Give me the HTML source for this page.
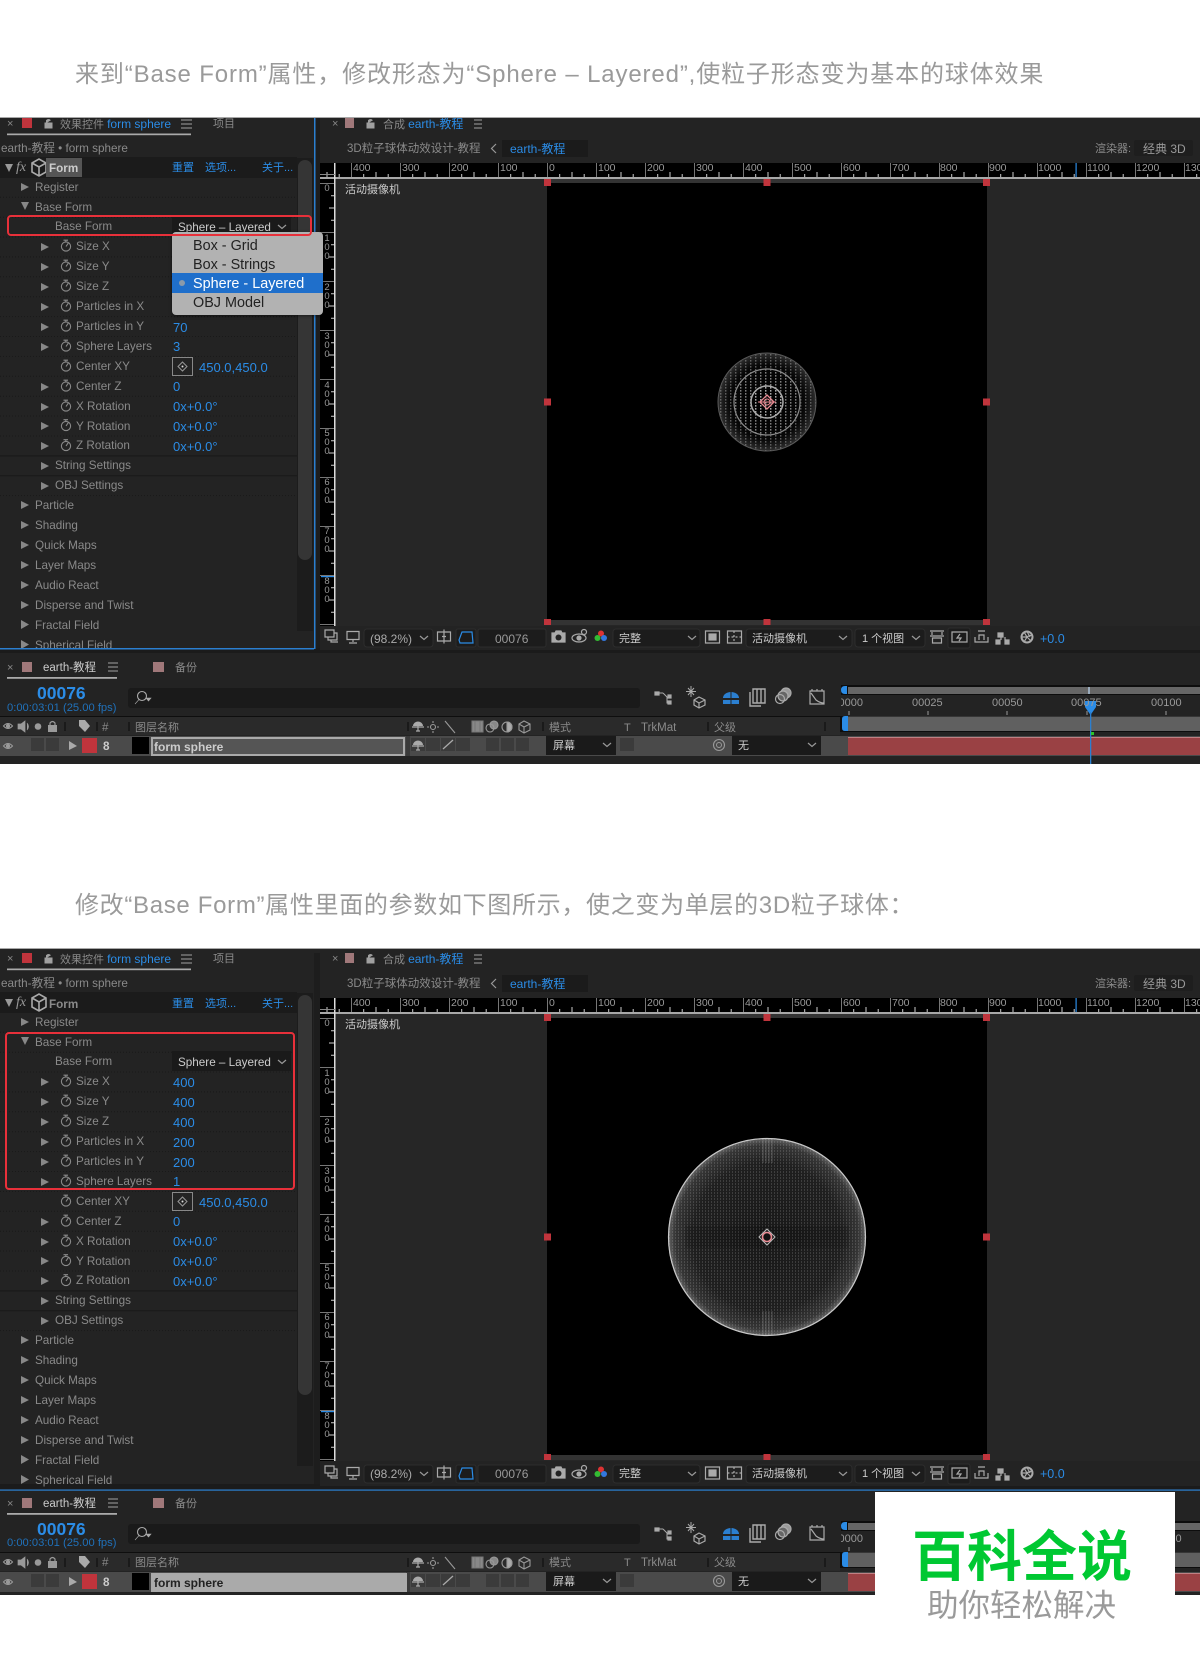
<!DOCTYPE html>
<html lang="zh"><head><meta charset="utf-8"><title>Form</title>
<style>
html,body{margin:0;padding:0;background:#fff}
body{width:1200px;height:1662px;position:relative;overflow:hidden;font-family:"Liberation Sans","Noto Sans CJK SC",sans-serif}
.h{position:absolute;left:75px;white-space:nowrap;color:#9a9a9a;font-size:24px;line-height:0;letter-spacing:.86px}
.p{position:absolute;left:0;width:1200px;height:764px}
.p svg.g{position:absolute;left:0;top:0}
.t,.b,.v,.r,.d,.c{position:absolute;white-space:nowrap;line-height:0;font-size:11.7px;color:#8a8a8a}
.t{margin-top:1px}
.n{margin-top:0}
.b{color:#2b8ce6}
.v{color:#2b8ce6;font-size:13px}
.r{font-size:10.5px;color:#999}
.d{font-size:9.5px;line-height:9px;color:#999;width:10px;text-align:center;left:322px}
.c{font-size:11px}
.w{color:#ccc}
.m{position:absolute;left:193px;font-size:14.4px;line-height:0;color:#222;white-space:nowrap;margin-top:1px}
.z{position:absolute;left:841px;width:22px;height:12px;overflow:hidden;line-height:12px;font-size:11px;color:#999;text-align:right;direction:rtl}
</style></head><body>
<svg width="0" height="0" style="position:absolute"><defs>
<pattern id="rh" x="547" y="163" width="49" height="14" patternUnits="userSpaceOnUse"><path d="M.5 0V14" stroke="#777"/><path d="M12.7 11V14M37.2 11V14M25 9V14" stroke="#ccc"/></pattern>
<pattern id="rv" x="320" y="183" width="14" height="49" patternUnits="userSpaceOnUse"><path d="M0 .5H14" stroke="#777"/><path d="M11 12.7H14M11 37.2H14M9 25H14" stroke="#ccc"/></pattern>
<pattern id="ga" width="5" height="3" patternUnits="userSpaceOnUse"><rect width="1.4" height="1.6" fill="#d8d8d8"/></pattern>
<pattern id="gb" width="3" height="3" patternUnits="userSpaceOnUse"><rect width="1" height="2" fill="#bdbdbd"/></pattern>
<radialGradient id="ra"><stop offset="0" stop-color="#0a0a0a" stop-opacity=".1"/><stop offset=".75" stop-color="#555" stop-opacity=".08"/><stop offset="1" stop-color="#888" stop-opacity=".35"/></radialGradient>
<radialGradient id="rb"><stop offset="0" stop-color="#181818"/><stop offset=".75" stop-color="#1f1f1f"/><stop offset=".93" stop-color="#363636"/><stop offset="1" stop-color="#666"/></radialGradient>
<g id="sw" fill="none" stroke="#8a8a8a" stroke-width="1.1"><circle cx="6" cy="7.5" r="4.6"/><path d="M3.5 1.2H8M5.8 1.2V3M6 7.5L8.5 3.8"/></g>
<g id="eye" fill="none" stroke="#9a9a9a" stroke-width="1.1"><path d="M0 4Q4.5-1 9 4Q4.5 9 0 4Z"/><circle cx="4.5" cy="4" r="1.6" fill="#9a9a9a"/></g>
<g id="sh"><path d="M1 6A5 4.5 0 0 1 11 6Z" fill="#aaa"/><path d="M0 7H12M6 6V11M4 11H8" stroke="#aaa" stroke-width="1.2" fill="none"/></g>
<g id="ck"><path d="M0 0L4 3.5L8 0" fill="none" stroke="#999" stroke-width="1.2"/></g>
<g id="panel">
<rect x="0" y="117" width="1200" height="647" fill="#232323"/>
<rect x="0" y="117" width="1200" height="1" fill="#a8a8a8"/>
<rect x="314" y="118" width="6" height="532" fill="#1d1d1d"/>
<rect x="0" y="157" width="297" height="21" fill="#1b1b1b"/>
<path d="M0 197.3H297M0 217.2H297M0 237H297M0 256.9H297M0 276.8H297M0 296.7H297M0 316.6H297M0 336.5H297M0 356.4H297M0 376.3H297M0 396.2H297M0 416H297M0 436H297M0 495.6H297" stroke="#191919" stroke-width="1" stroke-dasharray="1 2"/>
<path d="M0 455.9H297M0 475.7H297" stroke="#191919"/>
<rect x="297" y="158" width="16" height="473" fill="#1c1c1c"/>
<rect x="298" y="160" width="14" height="400" rx="7" fill="#353535"/>
<rect x="7" y="133.5" width="184" height="1.7" fill="#aaa"/>
<rect x="22" y="118" width="10" height="10" fill="#c0343c"/>
<path d="M45 123h7v5h-7zM46.5 123v-2.5q2-2 4 0" fill="#a0a0a0" stroke="#a0a0a0"/>
<path d="M181 120H192M181 124H192M181 128H192" stroke="#888" stroke-width="1.2"/>
<path d="M9 172L5 164H13Z" fill="#999"/>
<path d="M32 163L39 159L46 163V172L39 176L32 172ZM32 163L39 167L46 163M39 167V176" fill="none" stroke="#aaa" stroke-width="1.6"/>
<path d="M21 183L29 187L21 191Z" fill="#888"/>
<path d="M21 202H29L25 210Z" fill="#888"/>
<g fill="#888"><path d="M21 501L29 505L21 509ZM21 521L29 525L21 529ZM21 541L29 545L21 549ZM21 561L29 565L21 569ZM21 581L29 585L21 589ZM21 601L29 605L21 609ZM21 620L29 624.500L21 629ZM21 640L29 644.500L21 649Z"/>
<path d="M41 243L49 247L41 251ZM41 263L49 267L41 271ZM41 283L49 287L41 291ZM41 303L49 307L41 311ZM41 323L49 327L41 331ZM41 343L49 347L41 351ZM41 383L49 387L41 391ZM41 403L49 407L41 411ZM41 422L49 426L41 430ZM41 442L49 446L41 450ZM41 462L49 466L41 470ZM41 482L49 486L41 490Z"/></g>
<use href="#sw" x="60" y="239"/><use href="#sw" x="60" y="259"/><use href="#sw" x="60" y="279"/><use href="#sw" x="60" y="299"/><use href="#sw" x="60" y="319"/><use href="#sw" x="60" y="339"/><use href="#sw" x="60" y="359"/><use href="#sw" x="60" y="379"/><use href="#sw" x="60" y="399"/><use href="#sw" x="60" y="418.500"/><use href="#sw" x="60" y="438.500"/>
<rect x="172" y="216" width="119" height="20" fill="#1a1a1a"/>
<use href="#ck" x="278" y="225"/>
<rect x="172.500" y="357.500" width="20" height="18" fill="#232323" stroke="#888"/>
<path d="M182.500 362L187 366.500L182.500 371L178 366.500Z" fill="none" stroke="#999"/><circle cx="182.500" cy="366.500" r="1" fill="#ddd"/>
<path d="M345 118h9v10h-9z" fill="#a0787a"/>
<path d="M367 123h7v5h-7zM368.500 123v-2.500q2-2 4 0" fill="#a0a0a0" stroke="#a0a0a0"/>
<path d="M474 120H482M474 124H482M474 128H482" stroke="#888" stroke-width="1.200"/>
<path d="M496 144L491.500 148.500L496 153" fill="none" stroke="#999" stroke-width="1.200"/>
<rect x="502" y="140" width="86" height="17" fill="#1b1b1b"/>
<rect x="1134" y="140" width="59" height="16" rx="2" fill="#1e1e1e"/>
<rect x="320" y="163" width="880" height="14" fill="#000"/>
<rect x="320" y="163" width="880" height="14" fill="url(#rh)"/>
<rect x="320" y="177" width="880" height="2" fill="#a8a8a8"/>
<rect x="1075.500" y="163" width="1.200" height="14" fill="#2b8ce6"/>
<rect x="335" y="179" width="865" height="447" fill="#262626"/>
<rect x="547" y="179" width="440" height="5" fill="#333"/>
<rect x="547" y="619" width="440" height="6" fill="#333"/>
<rect x="547" y="183" width="440" height="437" fill="#000"/>
<rect x="320" y="179" width="14" height="447" fill="#000"/>
<rect x="320" y="179" width="14" height="447" fill="url(#rv)"/>
<rect x="334" y="163" width="1.500" height="463" fill="#ddd"/>
<rect x="320" y="174" width="15" height="1" fill="#888"/>
<rect x="321" y="576" width="13" height="1.200" fill="#2b8ce6"/>
<g fill="#c0343c"><rect x="544" y="179" width="7" height="7"/><rect x="763.500" y="179" width="7" height="7"/><rect x="983" y="179" width="7" height="7"/><rect x="544" y="398.500" width="7" height="7"/><rect x="983" y="398.500" width="7" height="7"/><rect x="544" y="619" width="7" height="6"/><rect x="763.500" y="619" width="7" height="6"/><rect x="983" y="619" width="7" height="6"/></g>
</g>
<g id="lower">
<rect x="320" y="626" width="880" height="24" fill="#232323"/>
<rect x="320" y="650" width="880" height="3" fill="#1b1b1b"/>
<rect x="0" y="648" width="320" height="5" fill="#1b1b1b"/>
<g fill="#1c1c1c" stroke="#2d2d2d"><rect x="364" y="629" width="69" height="18" rx="3"/><rect x="456" y="629" width="20" height="18" rx="2"/><rect x="478" y="629" width="68" height="18" rx="2"/><rect x="613" y="629" width="87" height="18" rx="3"/><rect x="746" y="629" width="106" height="18" rx="3"/><rect x="855" y="629" width="70" height="18" rx="3"/><rect x="948" y="628" width="22" height="20" rx="2"/></g>
<g fill="none" stroke="#aaa" stroke-width="1.200">
<path d="M325 630h9v7h-9zM328 637v3h9v-7h-3M331 640v2h7"/>
<path d="M347 631.500h12v8h-12zM353 640v2M349 643h8"/>
<path d="M437.500 632h13v9h-13zM444 629.500v14M442 636.500h4"/>
<path d="M459 640L462 632H472L473 643H460Z" stroke="#2b8ce6"/>
<path d="M552 633h3l1-2h5l1 2h3v9h-13z" fill="#aaa"/><circle cx="558.500" cy="637.500" r="3" fill="#232323" stroke="none"/>
<ellipse cx="579" cy="638" rx="7" ry="4"/><circle cx="579" cy="638" r="2" fill="#aaa"/><circle cx="584" cy="632" r="2.500"/>
<path d="M705.500 631h14v12h-14z"/><rect x="709" y="634" width="7" height="6" fill="#aaa"/>
<path d="M727.500 631h14v12h-14z"/><path d="M727.500 637h14M734 631v12" stroke-dasharray="2 2"/>
<path d="M930 631h14M930 636h14M932 632v3M942 632v3M932.500 638h9v5h-9z"/>
<path d="M952 632h15v10h-15zM960 634l-3 4h4l-2 3"/>
<path d="M975 637v5h13v-5M979 640v-5h5v5M978 631h7"/>
<path d="M998 633h5v4h-5zM996 640h4v4h-4zM1005 640h4v4h-4zM1001 637v3M1005 637v3" fill="#aaa"/>
<circle cx="1027" cy="637" r="5.500" stroke-width="2"/><path d="M1027 631.500L1030 637M1032 635L1026 637M1031 641L1027 637M1024 642L1027 637M1021.500 637L1027 637M1024 632L1027 637"/>
</g>
<circle cx="601" cy="633.500" r="3" fill="#d33"/><circle cx="597.500" cy="638" r="3" fill="#3b3"/><circle cx="604" cy="638" r="3" fill="#37d"/>
<use href="#ck" x="420" y="636"/><use href="#ck" x="688" y="636"/><use href="#ck" x="839" y="636"/><use href="#ck" x="912" y="636"/>
<rect x="7" y="677" width="110" height="1.800" fill="#aaa"/>
<rect x="22" y="662" width="10" height="10" fill="#a0787a"/>
<rect x="153" y="662" width="11" height="10" fill="#a0787a"/>
<path d="M108 663H118M108 667H118M108 671H118" stroke="#888" stroke-width="1.200"/>
<rect x="128" y="688" width="512" height="20" rx="3" fill="#1a1a1a"/>
<circle cx="142" cy="696" r="4.500" fill="none" stroke="#aaa" stroke-width="1.100"/><path d="M139 699.500L135 704M146 698H151L148.500 701Z" fill="#aaa" stroke="#aaa" stroke-width=".6"/>
<g fill="none" stroke="#aaa" stroke-width="1.200">
<path d="M656 693H663M663 693L667 697H671M667 697V703H671" stroke-width="1"/><rect x="655" y="692" width="4" height="3" fill="#aaa"/><rect x="668" y="695" width="3" height="3" fill="#aaa"/><rect x="668" y="701" width="3" height="3" fill="#aaa"/>
<path d="M688 688L694 695M694 688L688 695M691 686V697M686 691.500H696" stroke-width="1"/><path d="M699 697L705 700V705L699 708L694 705V700ZM694 700L699 703L705 700M699 703V708"/>
<path d="M753 689h12v14h-12zM757 689v14M761 689v14M750 692v14h11" stroke-width="1.400"/>
<circle cx="786" cy="693" r="5" fill="#999"/><circle cx="783" cy="696" r="5" fill="#666"/><circle cx="780" cy="699" r="4.500"/>
<path d="M810 691h14v13h-14zM811 693L816 700Q820 703 824 703M812 689v2M817 689v2M822 689v2"/>
</g>
<path d="M723 698A8 6 0 0 1 739 698ZM723 700h16v4h-16z" fill="#2b7fd0"/><path d="M731 692V705" stroke="#232323"/>
<rect x="0" y="716" width="840" height="1.500" fill="#0e0e0e"/>
<rect x="0" y="717" width="840" height="18" fill="#2a2a2a"/>
<use href="#eye" x="3.500" y="722"/>
<path d="M18 724h3l4-3v11l-4-3h-3zM27 723q3 3.500 0 7" fill="#9a9a9a" stroke="#9a9a9a" stroke-width=".7"/>
<circle cx="38" cy="726.500" r="3.300" fill="#9a9a9a"/>
<path d="M48 725h9v7h-9z" fill="#9a9a9a"/><path d="M50 725v-2q2.500-3 5 0v2" fill="none" stroke="#9a9a9a" stroke-width="1.200"/>
<path d="M79 720h6l5 6-5 6-6-6z" fill="#aaa"/>
<path d="M65 722v9M97 722v9M129 722v9M408 722v9M543 722v9M708 722v9M825 722v9" stroke="#111" stroke-width="1.200"/>
<use href="#sh" x="412" y="720"/>
<g fill="none" stroke="#999" stroke-width="1.100"><circle cx="433" cy="727" r="2.500"/><path d="M433 721v2M433 731v2M427 727h2M437 727h2M445 721L455 733"/>
<path d="M472 721h11v11h-11zM475 721v11M480 721v11" fill="#888" stroke="#777"/>
<circle cx="494" cy="725" r="4" fill="#888"/><circle cx="490" cy="728" r="4"/>
<circle cx="507" cy="727" r="5"/><path d="M507 722A5 5 0 0 1 507 732Z" fill="#aaa"/>
<path d="M519 724L524 721L530 724V730L524 733L519 730ZM519 724L524 727L530 724M524 727V733"/></g>
<rect x="0" y="736" width="840" height="20" fill="#4a4a4a"/>
<use href="#eye" x="3.500" y="742"/>
<rect x="31" y="738" width="13" height="13" fill="#3b3b3b"/><rect x="46" y="738" width="13" height="13" fill="#3b3b3b"/>
<path d="M69 741L77 746L69 750Z" fill="#aaa"/>
<rect x="82" y="738" width="15" height="15" fill="#c0343c"/>
<rect x="132" y="737" width="17" height="17" fill="#000"/>
<rect x="406" y="736" width="4" height="20" fill="#3a3a3a"/>
<rect x="411" y="738" width="14" height="13" fill="#3b3b3b"/><use href="#sh" x="412" y="739"/>
<rect x="426" y="738" width="14" height="13" fill="#3b3b3b"/><rect x="441" y="738" width="14" height="13" fill="#3b3b3b"/><rect x="456" y="738" width="14" height="13" fill="#3b3b3b"/>
<path d="M443 749L453 740" stroke="#aaa" stroke-width="1.300"/>
<rect x="486" y="738" width="13" height="13" fill="#3b3b3b"/><rect x="501" y="738" width="13" height="13" fill="#3b3b3b"/><rect x="516" y="738" width="13" height="13" fill="#3b3b3b"/>
<rect x="546" y="736" width="70" height="19" fill="#1a1a1a"/><use href="#ck" x="603" y="743"/>
<rect x="620" y="738" width="14" height="13" fill="#3b3b3b"/>
<circle cx="719" cy="745" r="5.500" fill="none" stroke="#999" stroke-width="1.100"/><circle cx="719" cy="745" r="2.500" fill="none" stroke="#999"/>
<rect x="732" y="736" width="89" height="19" fill="#1a1a1a"/><use href="#ck" x="808" y="743"/>
<rect x="821" y="736" width="19" height="20" fill="#4a4a4a"/>
<rect x="840" y="685" width="360" height="79" fill="#232323"/>
<rect x="841" y="685" width="359" height="10" fill="#0d0d0d"/><rect x="848" y="687" width="352" height="7" fill="#666"/>
<path d="M847 686H845Q841 686 841 690Q841 694 845 694H847Z" fill="#2b8ce6"/>
<rect x="1088" y="687" width="2" height="7" fill="#9ab"/>
<rect x="841" y="695" width="359" height="20" fill="#232323"/>
<path d="M849 711V715M928 711V715M1007 711V715M1087 711V715M1166 711V715" stroke="#999"/>
<rect x="840" y="716" width="360" height="16" fill="#0d0d0d"/><rect x="848" y="716.500" width="352" height="14.500" fill="#606060"/>
<path d="M848 716H845Q842 716 842 719V728Q842 731 845 731H848Z" fill="#2b8ce6"/>
<rect x="840" y="732" width="360" height="4" fill="#232323"/>
<rect x="840" y="736" width="360" height="20" fill="#4a4a4a"/>
<rect x="848" y="737" width="352" height="18" fill="#9a4144"/><rect x="848" y="737" width="352" height="1" fill="#c08083"/>
<path d="M1085 701H1096V707L1090.500 715L1085 707Z" fill="#2b8ce6"/>
<rect x="1090" y="712" width="1.300" height="52" fill="#2b7fd0"/>
<rect x="1091" y="732" width="3" height="3" fill="#2bc42b"/>
</g>
</defs></svg>

<div class="h" style="top:75px">来到“Base Form”属性，修改形态为“Sphere – Layered”,使粒子形态变为基本的球体效果</div>
<div class="h" style="top:906px;letter-spacing:.68px">修改“Base Form”属性里面的参数如下图所示，使之变为单层的3D粒子球体：</div>

<!-- PANEL 1 -->
<div class="p" style="top:0">
<svg class="g" width="1200" height="764"><use href="#panel"/><use href="#lower"/>
<rect x="46" y="158" width="36" height="19" fill="#555"/>
<circle cx="767" cy="402" r="49" fill="url(#ga)" opacity=".42"/><circle cx="767" cy="402" r="49" fill="url(#ra)" stroke="#5a5a5a"/>
<circle cx="767" cy="402" r="33" fill="url(#ga)" opacity=".3"/><circle cx="767" cy="402" r="33" fill="none" stroke="#8a8a8a" stroke-width="1.200"/>
<circle cx="767" cy="402" r="16" fill="url(#ga)" opacity=".5"/><circle cx="767" cy="402" r="16" fill="none" stroke="#aaa" stroke-width="1.500"/>
<path d="M767 395L774 402L767 409L760 402Z" fill="none" stroke="#e98a92" stroke-width="1.300"/><circle cx="767" cy="402" r="3" fill="none" stroke="#e98a92"/>
<path d="M758 402H776" stroke="#e98a92"/>
<rect x="0" y="648" width="314" height="1.500" fill="#2b7fd0"/><rect x="314" y="118" width="1.500" height="531" fill="#2b7fd0"/>
</svg>
<div class="c" style="left:7px;top:124px;color:#888">×</div>
<div class="c" style="left:60px;top:124px">效果控件 <span style="color:#2b8ce6;font-size:12px">form sphere</span></div>
<div class="c" style="left:213px;top:124px">项目</div>
<div class="t" style="left:1px;top:148px">earth-教程 • form sphere</div>
<div class="t n" style="left:16px;top:168px;font-style:italic;font-family:'Liberation Serif',serif;font-size:14px;color:#999">fx</div>
<div class="t w" style="left:49px;top:168px;font-weight:bold">Form</div>
<div class="b" style="left:172px;top:168px;font-size:11px">重置</div><div class="b" style="left:205px;top:168px;font-size:11px">选项...</div><div class="b" style="left:262px;top:168px;font-size:11px">关于...</div>
<div class="t" style="left:35px;top:187px">Register</div>
<div class="t" style="left:35px;top:206.500px">Base Form</div>
<div class="t" style="left:55px;top:226px">Base Form</div>
<div class="t w" style="left:178px;top:227px">Sphere – Layered</div>
<div class="t" style="left:76px;top:246px">Size X</div>
<div class="t" style="left:76px;top:266px">Size Y</div>
<div class="t" style="left:76px;top:286px">Size Z</div>
<div class="t" style="left:76px;top:306px">Particles in X</div>
<div class="t" style="left:76px;top:326px">Particles in Y</div>
<div class="t" style="left:76px;top:346px">Sphere Layers</div>
<div class="t" style="left:76px;top:366px">Center XY</div>
<div class="t" style="left:76px;top:385.500px">Center Z</div>
<div class="t" style="left:76px;top:405.500px">X Rotation</div>
<div class="t" style="left:76px;top:425.500px">Y Rotation</div>
<div class="t" style="left:76px;top:445px">Z Rotation</div>
<div class="t" style="left:55px;top:465px">String Settings</div>
<div class="t" style="left:55px;top:485px">OBJ Settings</div>
<div class="t" style="left:35px;top:505px">Particle</div>
<div class="t" style="left:35px;top:525px">Shading</div>
<div class="t" style="left:35px;top:545px">Quick Maps</div>
<div class="t" style="left:35px;top:565px">Layer Maps</div>
<div class="t" style="left:35px;top:584.500px">Audio React</div>
<div class="t" style="left:35px;top:604.500px">Disperse and Twist</div>
<div class="t" style="left:35px;top:624.500px">Fractal Field</div>
<div style="position:absolute;left:0;top:636px;width:297px;height:12px;overflow:hidden"><div class="t" style="left:35px;top:8.500px">Spherical Field</div></div>
<div class="v" style="left:173px;top:327.500px">70</div><div class="v" style="left:173px;top:347px">3</div>
<div class="v" style="left:199px;top:367.500px">450.0,450.0</div><div class="v" style="left:173px;top:387px">0</div>
<div class="v" style="left:173px;top:407px">0x+0.0°</div><div class="v" style="left:173px;top:427px">0x+0.0°</div><div class="v" style="left:173px;top:447px">0x+0.0°</div>
<div class="c" style="left:332px;top:124px;color:#888">×</div>
<div class="c" style="left:383px;top:124px">合成 <span style="color:#2b8ce6;font-size:12px">earth-教程</span></div>
<div class="t n" style="left:347px;top:149px;font-size:11.500px">3D粒子球体动效设计-教程</div>
<div class="b" style="left:510px;top:149px;font-size:12px">earth-教程</div>
<div class="t n" style="left:1095px;top:149px;font-size:11px">渲染器:</div><div class="t n" style="left:1143px;top:149px;color:#999;font-size:12px">经典 3D</div>
<div class="r" style="left:353px;top:168px">400</div><div class="r" style="left:402px;top:168px">300</div><div class="r" style="left:451px;top:168px">200</div><div class="r" style="left:500px;top:168px">100</div><div class="r" style="left:549px;top:168px">0</div><div class="r" style="left:598px;top:168px">100</div><div class="r" style="left:647px;top:168px">200</div><div class="r" style="left:696px;top:168px">300</div><div class="r" style="left:745px;top:168px">400</div><div class="r" style="left:794px;top:168px">500</div><div class="r" style="left:843px;top:168px">600</div><div class="r" style="left:892px;top:168px">700</div><div class="r" style="left:940px;top:168px">800</div><div class="r" style="left:989px;top:168px">900</div><div class="r" style="left:1038px;top:168px">1000</div><div class="r" style="left:1087px;top:168px">1100</div><div class="r" style="left:1136px;top:168px">1200</div><div class="r" style="left:1185px;top:168px">1300</div>
<div class="d" style="top:184px">0</div><div class="d" style="top:234px">1<br>0<br>0</div><div class="d" style="top:283px">2<br>0<br>0</div><div class="d" style="top:332px">3<br>0<br>0</div><div class="d" style="top:381px">4<br>0<br>0</div><div class="d" style="top:429px">5<br>0<br>0</div><div class="d" style="top:478px">6<br>0<br>0</div><div class="d" style="top:527px">7<br>0<br>0</div><div class="d" style="top:577px">8<br>0<br>0</div>
<div class="t w n" style="left:345px;top:190px;font-size:11px">活动摄像机</div>
<div class="t n" style="left:370px;top:638.500px;color:#aaa;font-size:12px">(98.2%)</div><div class="t n" style="left:495px;top:638.500px;color:#999;font-size:12px">00076</div><div class="t w n" style="left:619px;top:638.500px;font-size:11px">完整</div><div class="t w n" style="left:752px;top:638.500px;font-size:11px">活动摄像机</div><div class="t w n" style="left:862px;top:638.500px;font-size:11px">1 个视图</div><div class="b" style="left:1040px;top:638.500px;font-size:12.500px">+0.0</div>
<div class="c" style="left:7px;top:668px;color:#888">×</div>
<div class="t w n" style="left:43px;top:668px;font-size:11.500px">earth-教程</div><div class="c" style="left:175px;top:668px">备份</div>
<div class="b" style="left:37px;top:693px;font-size:17.500px;font-weight:bold">00076</div>
<div class="t n" style="left:7px;top:707.500px;font-size:11.200px;color:#2071ba">0:00:03:01 (25.00 fps)</div>
<div class="t n" style="left:102px;top:728px">#</div><div class="c" style="left:135px;top:728px">图层名称</div>
<div class="c" style="left:549px;top:728px">模式</div><div class="c" style="left:624px;top:728px">T</div><div class="t n" style="left:641px;top:728px;font-size:11.500px">TrkMat</div><div class="c" style="left:714px;top:728px">父级</div>
<div class="t n" style="left:103px;top:747px;color:#ccc;font-weight:bold">8</div>
<div style="position:absolute;left:151px;top:737px;width:250px;height:15px;border:2px solid #aaa;background:#555"></div>
<div class="t w n" style="left:154px;top:747px;font-weight:bold;font-size:12px">form sphere</div>
<div class="t w n" style="left:553px;top:746px;font-size:11px">屏幕</div><div class="t w n" style="left:738px;top:746px;font-size:11px">无</div>
<div class="z" style="top:697px">0000</div>
<div class="r" style="left:912px;top:703px;font-size:11px">00025</div><div class="r" style="left:992px;top:703px;font-size:11px">00050</div><div class="r" style="left:1071px;top:703px;font-size:11px">00075</div><div class="r" style="left:1151px;top:703px;font-size:11px">00100</div>
<div style="position:absolute;left:172px;top:232px;width:151px;height:83px;background:#b2b2b2;border-radius:4px;box-shadow:0 1px 3px rgba(0,0,0,.5)"></div>
<div style="position:absolute;left:172px;top:273px;width:151px;height:20px;background:#1f6fcb"></div>
<div style="position:absolute;left:179px;top:280px;width:6px;height:6px;border-radius:50%;background:#8a9aaa"></div>
<div class="m" style="top:245px">Box - Grid</div><div class="m" style="top:264px">Box - Strings</div><div class="m" style="top:283px;color:#fff">Sphere - Layered</div><div class="m" style="top:302px">OBJ Model</div>
<div style="position:absolute;left:7px;top:215px;width:301px;height:17px;border:2px solid #e8303a;border-radius:4px"></div>
</div>

<!-- PANEL 2 -->
<div style="position:absolute;left:0;top:948px;width:1200px;height:10px;background:#232323;border-top:1px solid #a8a8a8;box-sizing:border-box"></div>
<div class="p" style="top:835px;height:760px;overflow:hidden">
<svg class="g" width="1200" height="764"><use href="#panel"/><use href="#lower" y="1"/>
<rect x="0" y="117" width="1200" height="1" fill="#232323"/>
<circle cx="767" cy="402" r="99" fill="url(#rb)"/>
<circle cx="767" cy="402" r="99" fill="url(#gb)" opacity=".2"/>
<rect x="685" y="391" width="164" height="22" fill="#000" opacity=".12"/>
<path d="M763 304V328M766 304V328M769 304V328M772 304V328M763 476V500M766 476V500M769 476V500M772 476V500" stroke="#bbb" stroke-width="1" opacity=".3"/>
<circle cx="767" cy="402" r="98.500" fill="none" stroke="#c8c8c8" stroke-width="1.200"/>
<path d="M767 394L775 402L767 410L759 402Z" fill="none" stroke="#bbb"/><circle cx="767" cy="402" r="4.500" fill="#111" stroke="#e98a92" stroke-width="1.600"/>
<rect x="0" y="654.500" width="1200" height="1.200" fill="#2b7fd0"/>
</svg>
<div class="c" style="left:7px;top:124px;color:#888">×</div>
<div class="c" style="left:60px;top:124px">效果控件 <span style="color:#2b8ce6;font-size:12px">form sphere</span></div>
<div class="c" style="left:213px;top:124px">项目</div>
<div class="t" style="left:1px;top:148px">earth-教程 • form sphere</div>
<div class="t n" style="left:16px;top:168px;font-style:italic;font-family:'Liberation Serif',serif;font-size:14px;color:#999">fx</div>
<div class="t" style="left:49px;top:168.500px;font-weight:bold">Form</div>
<div class="b" style="left:172px;top:168.500px;font-size:11px">重置</div><div class="b" style="left:205px;top:168.500px;font-size:11px">选项...</div><div class="b" style="left:262px;top:168.500px;font-size:11px">关于...</div>
<div class="t" style="left:35px;top:187px">Register</div>
<div class="t" style="left:35px;top:206.500px">Base Form</div>
<div class="t" style="left:55px;top:226px">Base Form</div>
<div class="t w" style="left:178px;top:227px">Sphere – Layered</div>
<div class="t" style="left:76px;top:246px">Size X</div>
<div class="t" style="left:76px;top:266px">Size Y</div>
<div class="t" style="left:76px;top:286px">Size Z</div>
<div class="t" style="left:76px;top:306px">Particles in X</div>
<div class="t" style="left:76px;top:326px">Particles in Y</div>
<div class="t" style="left:76px;top:346px">Sphere Layers</div>
<div class="t" style="left:76px;top:366px">Center XY</div>
<div class="t" style="left:76px;top:385.500px">Center Z</div>
<div class="t" style="left:76px;top:405.500px">X Rotation</div>
<div class="t" style="left:76px;top:425.500px">Y Rotation</div>
<div class="t" style="left:76px;top:445px">Z Rotation</div>
<div class="t" style="left:55px;top:465px">String Settings</div>
<div class="t" style="left:55px;top:485px">OBJ Settings</div>
<div class="t" style="left:35px;top:505px">Particle</div>
<div class="t" style="left:35px;top:525px">Shading</div>
<div class="t" style="left:35px;top:545px">Quick Maps</div>
<div class="t" style="left:35px;top:565px">Layer Maps</div>
<div class="t" style="left:35px;top:584.500px">Audio React</div>
<div class="t" style="left:35px;top:604.500px">Disperse and Twist</div>
<div class="t" style="left:35px;top:624.500px">Fractal Field</div>
<div class="t" style="left:35px;top:644.500px">Spherical Field</div>
<div class="v" style="left:173px;top:247.500px">400</div><div class="v" style="left:173px;top:267.500px">400</div><div class="v" style="left:173px;top:287.500px">400</div><div class="v" style="left:173px;top:307.500px">200</div><div class="v" style="left:173px;top:327.500px">200</div><div class="v" style="left:173px;top:347px">1</div>
<div class="v" style="left:199px;top:367.500px">450.0,450.0</div><div class="v" style="left:173px;top:387px">0</div>
<div class="v" style="left:173px;top:407px">0x+0.0°</div><div class="v" style="left:173px;top:427px">0x+0.0°</div><div class="v" style="left:173px;top:447px">0x+0.0°</div>
<div class="c" style="left:332px;top:124px;color:#888">×</div>
<div class="c" style="left:383px;top:124px">合成 <span style="color:#2b8ce6;font-size:12px">earth-教程</span></div>
<div class="t n" style="left:347px;top:149px;font-size:11.500px">3D粒子球体动效设计-教程</div>
<div class="b" style="left:510px;top:149px;font-size:12px">earth-教程</div>
<div class="t n" style="left:1095px;top:149px;font-size:11px">渲染器:</div><div class="t n" style="left:1143px;top:149px;color:#999;font-size:12px">经典 3D</div>
<div class="r" style="left:353px;top:168px">400</div><div class="r" style="left:402px;top:168px">300</div><div class="r" style="left:451px;top:168px">200</div><div class="r" style="left:500px;top:168px">100</div><div class="r" style="left:549px;top:168px">0</div><div class="r" style="left:598px;top:168px">100</div><div class="r" style="left:647px;top:168px">200</div><div class="r" style="left:696px;top:168px">300</div><div class="r" style="left:745px;top:168px">400</div><div class="r" style="left:794px;top:168px">500</div><div class="r" style="left:843px;top:168px">600</div><div class="r" style="left:892px;top:168px">700</div><div class="r" style="left:940px;top:168px">800</div><div class="r" style="left:989px;top:168px">900</div><div class="r" style="left:1038px;top:168px">1000</div><div class="r" style="left:1087px;top:168px">1100</div><div class="r" style="left:1136px;top:168px">1200</div><div class="r" style="left:1185px;top:168px">1300</div>
<div class="d" style="top:184px">0</div><div class="d" style="top:234px">1<br>0<br>0</div><div class="d" style="top:283px">2<br>0<br>0</div><div class="d" style="top:332px">3<br>0<br>0</div><div class="d" style="top:381px">4<br>0<br>0</div><div class="d" style="top:429px">5<br>0<br>0</div><div class="d" style="top:478px">6<br>0<br>0</div><div class="d" style="top:527px">7<br>0<br>0</div><div class="d" style="top:577px">8<br>0<br>0</div>
<div class="t w n" style="left:345px;top:190px;font-size:11px">活动摄像机</div>
<div class="t n" style="left:370px;top:639px;color:#aaa;font-size:12px">(98.2%)</div><div class="t n" style="left:495px;top:639px;color:#999;font-size:12px">00076</div><div class="t w n" style="left:619px;top:639px;font-size:11px">完整</div><div class="t w n" style="left:752px;top:639px;font-size:11px">活动摄像机</div><div class="t w n" style="left:862px;top:639px;font-size:11px">1 个视图</div><div class="b" style="left:1040px;top:639px;font-size:12.500px">+0.0</div>
<div class="c" style="left:7px;top:669px;color:#888">×</div>
<div class="t w n" style="left:43px;top:669px;font-size:11.500px">earth-教程</div><div class="c" style="left:175px;top:669px">备份</div>
<div class="b" style="left:37px;top:694px;font-size:17.500px;font-weight:bold">00076</div>
<div class="t n" style="left:7px;top:708px;font-size:11.200px;color:#2071ba">0:00:03:01 (25.00 fps)</div>
<div class="t n" style="left:102px;top:728px">#</div><div class="c" style="left:135px;top:728px">图层名称</div>
<div class="c" style="left:549px;top:728px">模式</div><div class="c" style="left:624px;top:728px">T</div><div class="t n" style="left:641px;top:728px;font-size:11.500px">TrkMat</div><div class="c" style="left:714px;top:728px">父级</div>
<div class="t n" style="left:103px;top:748px;color:#ccc;font-weight:bold">8</div>
<div style="position:absolute;left:151px;top:738px;width:256px;height:19px;background:#aaa"></div>
<div class="t n" style="left:154px;top:748px;font-weight:bold;color:#222;font-size:12px">form sphere</div>
<div class="t w n" style="left:553px;top:747px;font-size:11px">屏幕</div><div class="t w n" style="left:738px;top:747px;font-size:11px">无</div>
<div class="z" style="top:698px">0000</div>
<div class="r" style="left:912px;top:704px;font-size:11px">00025</div><div class="r" style="left:992px;top:704px;font-size:11px">00050</div><div class="r" style="left:1071px;top:704px;font-size:11px">00075</div><div class="r" style="left:1151px;top:704px;font-size:11px">00100</div>
<div style="position:absolute;left:5px;top:197px;width:286px;height:154px;border:2px solid #e8303a;border-radius:4px"></div>
</div>

<!-- watermark -->
<div style="position:absolute;left:875px;top:1492px;width:300px;height:170px;background:#fff"></div>
<div style="position:absolute;left:912px;top:1552px;font-size:55px;line-height:0;font-weight:bold;color:#00c832;white-space:nowrap;font-family:'Noto Sans CJK SC',sans-serif">百科全说</div>
<div style="position:absolute;left:927px;top:1603px;font-size:31.500px;line-height:0;color:#9a9a9a;white-space:nowrap;font-family:'Noto Sans CJK SC',sans-serif">助你轻松解决</div>
</body></html>
